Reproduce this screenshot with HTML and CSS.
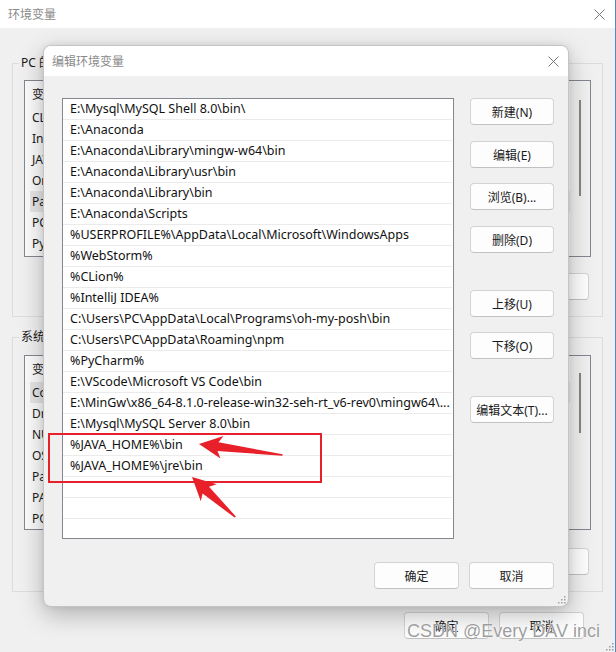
FILE: index.html
```html
<!DOCTYPE html>
<html lang="zh-CN">
<head>
<meta charset="utf-8">
<title>环境变量</title>
<link rel="stylesheet" href="styles.css">
</head>
<body>
<div class="win">
  <div class="titlebar">
    <span class="title">环境变量</span>
    <svg class="close" width="11" height="11" viewBox="0 0 11 11"><path d="M0.5 0.5L10.5 10.5M10.5 0.5L0.5 10.5" stroke="#777" stroke-width="1"/></svg>
  </div>
  <div class="win-body">
    <fieldset class="group g-user">
      <legend>PC 的用户变量(U)</legend>
      <div class="vlist">
        <div class="vrows">
          <div class="vhead"><span>变量</span></div>
          <div class="vrow">CLion</div>
          <div class="vrow">IntelliJ IDEA</div>
          <div class="vrow">JAVA_HOME</div>
          <div class="vrow">OneDrive</div>
          <div class="vrow sel">Path</div>
          <div class="vrow">PCHarm</div>
          <div class="vrow">PyCharm</div>
        </div>
        <div class="vscroll"><div class="thumb t-user"></div></div>
      </div>
      <div class="btnrow">
        <button class="btn wbtn">新建(N)...</button>
        <button class="btn wbtn">编辑(E)...</button>
        <button class="btn wbtn">删除(D)</button>
      </div>
    </fieldset>
    <fieldset class="group g-sys">
      <legend>系统变量(S)</legend>
      <div class="vlist sys">
        <div class="vrows">
          <div class="vhead"><span>变量</span></div>
          <div class="vrow sel">ComSpec</div>
          <div class="vrow">DriverData</div>
          <div class="vrow">NUMBER_OF_PROCESSORS</div>
          <div class="vrow">OS</div>
          <div class="vrow">Path</div>
          <div class="vrow">PATHEXT</div>
          <div class="vrow">POWERSHELL_DISTRIBUTION_CHANNEL</div>
        </div>
        <div class="vscroll"><div class="thumb t-sys"></div></div>
      </div>
      <div class="btnrow b-sys">
        <button class="btn wbtn">新建(W)...</button>
        <button class="btn wbtn">编辑(I)...</button>
        <button class="btn wbtn">删除(L)</button>
      </div>
    </fieldset>
    <div class="btnrow b-main">
      <button class="btn wbtn">确定</button>
      <button class="btn wbtn">取消</button>
    </div>
  </div>
  <svg class="grip g-win" width="8" height="8" viewBox="0 0 8 8"><g fill="#9a9a9a"><rect x="6" y="0" width="1.5" height="1.5"/><rect x="3" y="3" width="1.5" height="1.5"/><rect x="6" y="3" width="1.5" height="1.5"/><rect x="0" y="6" width="1.5" height="1.5"/><rect x="3" y="6" width="1.5" height="1.5"/><rect x="6" y="6" width="1.5" height="1.5"/></g></svg>
</div>

<div class="dialog">
  <div class="dlg-title">
    <span class="title">编辑环境变量</span>
    <svg class="close" width="11" height="11" viewBox="0 0 11 11"><path d="M0.5 0.5L10.5 10.5M10.5 0.5L0.5 10.5" stroke="#777" stroke-width="1"/></svg>
  </div>
  <div class="dlg-body">
    <div class="dlg-main">
      <div class="plist">
        <div class="prow">E:\Mysql\MySQL Shell 8.0\bin\</div>
        <div class="prow">E:\Anaconda</div>
        <div class="prow">E:\Anaconda\Library\mingw-w64\bin</div>
        <div class="prow">E:\Anaconda\Library\usr\bin</div>
        <div class="prow">E:\Anaconda\Library\bin</div>
        <div class="prow">E:\Anaconda\Scripts</div>
        <div class="prow">%USERPROFILE%\AppData\Local\Microsoft\WindowsApps</div>
        <div class="prow">%WebStorm%</div>
        <div class="prow">%CLion%</div>
        <div class="prow">%IntelliJ IDEA%</div>
        <div class="prow">C:\Users\PC\AppData\Local\Programs\oh-my-posh\bin</div>
        <div class="prow">C:\Users\PC\AppData\Roaming\npm</div>
        <div class="prow">%PyCharm%</div>
        <div class="prow">E:\VScode\Microsoft VS Code\bin</div>
        <div class="prow">E:\MinGw\x86_64-8.1.0-release-win32-seh-rt_v6-rev0\mingw64\...</div>
        <div class="prow">E:\Mysql\MySQL Server 8.0\bin</div>
        <div class="prow">%JAVA_HOME%\bin</div>
        <div class="prow">%JAVA_HOME%\jre\bin</div>
        <div class="prow"></div>
        <div class="prow"></div>
        <div class="prow"></div>
      </div>
      <div class="dlg-side">
        <button class="btn sbtn">新建(N)</button>
        <button class="btn sbtn">编辑(E)</button>
        <button class="btn sbtn">浏览(B)...</button>
        <button class="btn sbtn">删除(D)</button>
        <button class="btn sbtn far">上移(U)</button>
        <button class="btn sbtn">下移(O)</button>
        <button class="btn sbtn far">编辑文本(T)...</button>
      </div>
    </div>
    <div class="dlg-foot">
      <button class="btn fbtn">确定</button>
      <button class="btn fbtn">取消</button>
    </div>
  </div>
  <svg class="grip g-dlg" width="8" height="8" viewBox="0 0 8 8"><g fill="#a0a0a0"><rect x="6" y="0" width="1.5" height="1.5"/><rect x="3" y="3" width="1.5" height="1.5"/><rect x="6" y="3" width="1.5" height="1.5"/><rect x="0" y="6" width="1.5" height="1.5"/><rect x="3" y="6" width="1.5" height="1.5"/><rect x="6" y="6" width="1.5" height="1.5"/></g></svg>
</div>

<svg class="annot" width="616" height="652" viewBox="0 0 616 652">
  <rect x="49" y="434" width="272" height="48" fill="none" stroke="#e8202a" stroke-width="2"/>
  <polygon fill="#e8202a" points="199,444 223.5,436 218.5,442.3 282.5,454.2 282.5,455.8 217.5,451 220.5,458.5"/>
  <polygon fill="#e8202a" points="192,477 216.8,484.3 209,486.8 235.8,516.4 234.6,517.6 202.6,493.4 200.8,501.3"/>
</svg>
<div class="watermark">CSDN @Every DAV inci</div>
</body>
</html>
```
FILE: styles.css
```css
* { box-sizing: border-box; }
html, body { margin: 0; padding: 0; }
body {
  width: 616px;
  height: 652px;
  overflow: hidden;
  position: relative;
  background: #f0f0f0;
  font-family: "Noto Sans", "Noto Sans CJK SC", sans-serif;
  font-size: 12px;
  color: #1a1a1a;
}

/* background window */
.win {
  position: relative;
  width: 616px;
  height: 652px;
  display: flex;
  flex-direction: column;
  background: #f0f0f0;
  border-right: 1px solid #5a84c2;
}
.titlebar {
  height: 28px;
  flex: none;
  background: #fff;
  display: flex;
  align-items: center;
  justify-content: space-between;
  padding: 0 10px 0 8px;
}
.title { color: #8a8a8a; font-size: 12px; }
.win-body {
  flex: 1;
  padding: 27px 12px 0 12px;
  display: flex;
  flex-direction: column;
}
.group {
  margin: 0;
  padding: 9px 11px 16px 11px;
  border: 1px solid #dcdcdc;
  min-width: 0;
}
.group legend {
  padding: 0 2px;
  margin-left: -5px;
  line-height: 16px;
  font-size: 12px;
}
.g-sys { margin-top: 12px; padding-top: 10px; }
.vlist {
  height: 177px;
  border: 1px solid #828790;
  background: #fbfbfb;
  display: flex;
}
.vlist.sys { height: 175px; }
.vrows { flex: 1; overflow: hidden; }
.vhead {
  height: 26px;
  display: flex;
  align-items: center;
  padding-left: 7px;
}
.vrow {
  height: 21px;
  line-height: 21px;
  margin-left: 5px;
  padding-left: 2px;
  white-space: nowrap;
}
.vrow.sel { background: #e6e6e6; }
.vscroll {
  width: 20px;
  background: #f0f0f0;
  display: flex;
  justify-content: center;
}
.thumb { width: 2px; background: #858585; }
.t-user { margin-top: 19px; height: 96px; }
.t-sys { margin-top: 17px; height: 60px; }
.btnrow {
  display: flex;
  justify-content: flex-end;
  gap: 10px;
  margin-top: 16px;
  padding-right: 2px;
}
.btnrow.b-sys { margin-top: 18px; }
.btnrow.b-main { margin-top: 20px; padding-right: 19px; }

.btn {
  height: 27px;
  padding: 0;
  border: 1px solid #d3d3d3;
  border-bottom-color: #c2c2c2;
  border-radius: 4px;
  background: #fdfdfd;
  font-family: inherit;
  font-size: 12px;
  color: #1a1a1a;
  display: flex;
  align-items: center;
  justify-content: center;
}
.wbtn { width: 85px; }

.grip { position: absolute; }
.g-win { right: 1px; bottom: 1px; }

/* dialog */
.dialog {
  position: absolute;
  left: 43px;
  top: 45px;
  width: 526px;
  height: 562px;
  background: #f0f0f0;
  border: 1px solid #c4c4c4;
  border-radius: 8px;
  box-shadow: 0 8px 24px rgba(0, 0, 0, 0.26), 0 0 6px rgba(0, 0, 0, 0.08);
  overflow: hidden;
  display: flex;
  flex-direction: column;
}
.dlg-title {
  height: 30px;
  flex: none;
  background: #fff;
  display: flex;
  align-items: center;
  justify-content: space-between;
  padding: 0 9px 0 8px;
}
.dlg-body {
  flex: 1;
  padding: 22px 14px 17px 18px;
  display: flex;
  flex-direction: column;
}
.dlg-main { display: flex; gap: 16px; }
.plist {
  width: 392px;
  height: 441px;
  border: 1px solid #828790;
  background: #fff;
  overflow: hidden;
}
.prow {
  height: 21px;
  line-height: 20px;
  border-bottom: 1px solid #ebebeb;
  margin-right: 1px;
  padding-left: 7px;
  font-size: 12.5px;
  white-space: nowrap;
  overflow: hidden;
  text-overflow: ellipsis;
  color: #111;
}
.dlg-side {
  width: 84px;
  display: flex;
  flex-direction: column;
  gap: 15px;
}
.sbtn { width: 84px; }
.sbtn:nth-child(2), .sbtn:nth-child(4) { margin-top: 1px; }
.sbtn.far { margin-top: 22px; }
.dlg-foot {
  margin-top: 23px;
  display: flex;
  justify-content: flex-end;
  gap: 10px;
}
.fbtn { width: 85px; }
.g-dlg { right: 2px; bottom: 2px; }

/* annotations */
.annot {
  position: absolute;
  left: 0;
  top: 0;
  pointer-events: none;
}
.watermark {
  position: absolute;
  left: 407px;
  top: 620px;
  font-family: "Liberation Sans", Arial, sans-serif;
  font-size: 18px;
  line-height: 22px;
  color: rgba(140, 140, 140, 0.85);
  text-shadow: 0 0 1px #fff, 0 0 1px #fff;
  white-space: nowrap;
}
```
